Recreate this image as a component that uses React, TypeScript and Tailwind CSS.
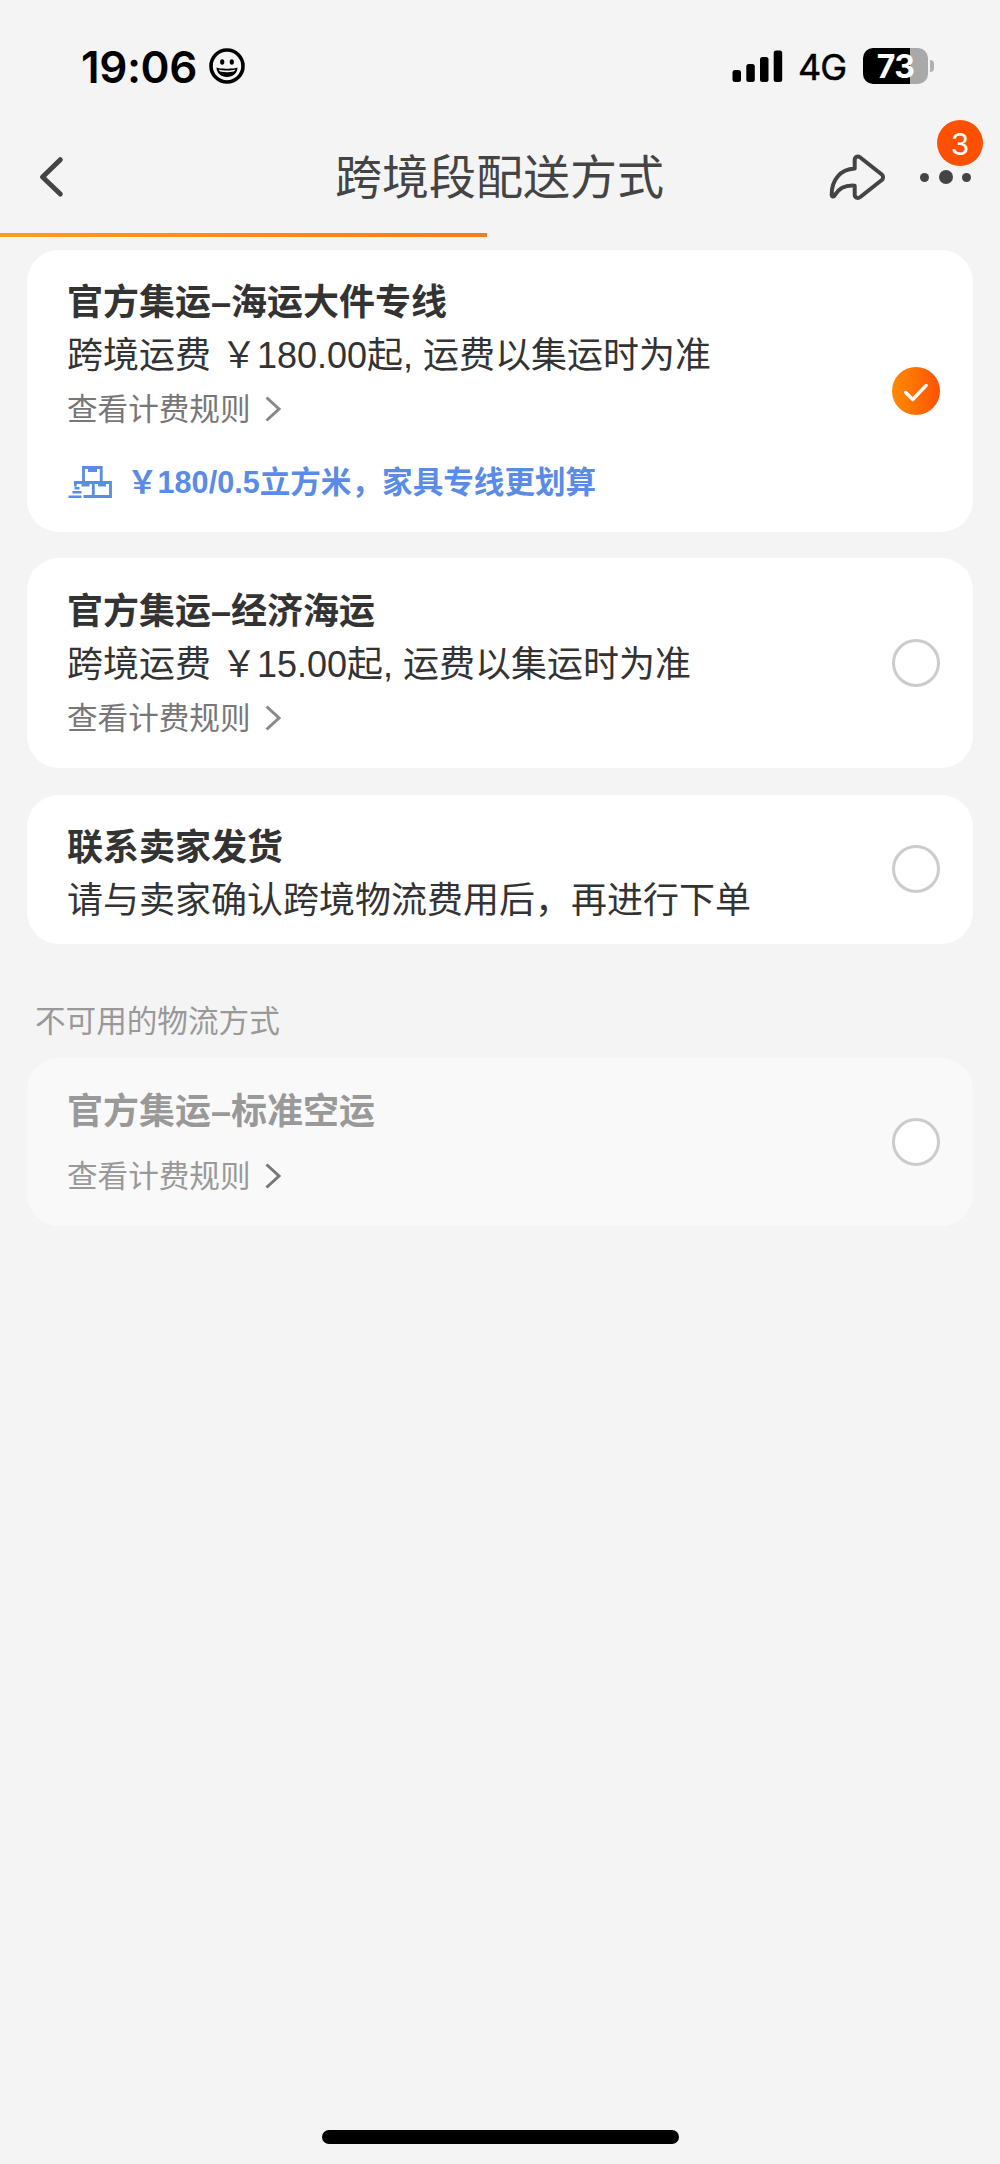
import React from 'react';
import clsx from 'clsx';

type ShippingOption = {
  title: string;
  price?: string;
  rules?: boolean;
  promo?: string;
  selected?: boolean;
  disabled?: boolean;
  className: string;
};

// \uFFE5 is the full-width yen sign, \uFF0C the full-width comma
const options: ShippingOption[] = [
  {
    title: '官方集运–海运大件专线',
    price: '跨境运费 \uFFE5180.00起, 运费以集运时为准',
    rules: true,
    promo: '\uFFE5180/0.5立方米\uFF0C家具专线更划算',
    selected: true,
    className: 'h-[282px] pt-[26px]',
  },
  {
    title: '官方集运–经济海运',
    price: '跨境运费 \uFFE515.00起, 运费以集运时为准',
    rules: true,
    className: 'mt-[26px] h-[210px] pt-[27px]',
  },
  {
    title: '联系卖家发货',
    price: '请与卖家确认跨境物流费用后\uFF0C再进行下单',
    className: 'mt-[27px] h-[149px] pt-[26px]',
  },
];

const unavailable: ShippingOption = {
  title: '官方集运–标准空运',
  rules: true,
  disabled: true,
  className: 'h-[168px] pt-[27px]',
};

function StatusBar() {
  return (
    <div className="flex h-[132px] items-center pl-[81px] pr-[66px] text-black">
      <span className="mt-[2px] font-[Inter] text-[44px] font-semibold leading-none tracking-[-0.4px]">19:06</span>
      <svg className="ml-3 h-9 w-9" viewBox="0 0 36 36" fill="none">
        <circle cx="18" cy="18" r="16" stroke="currentColor" strokeWidth="3.6" />
        <ellipse cx="13.2" cy="14" rx="2.1" ry="2.8" fill="currentColor" />
        <ellipse cx="22.8" cy="14" rx="2.1" ry="2.8" fill="currentColor" />
        <path d="M7.5 19.5c3 1.6 18 1.6 21 0 0 5.500-4.500 9.500-10.500 9.500s-10.500-4-10.500-9.500z" fill="currentColor" />
        <path d="M9.700 21.600c4 1.300 12.600 1.300 16.600 0-.3 1-.8 1.600-1.500 2-4 .7-9.600.7-13.600 0-.7-.4-1.200-1-1.500-2z" fill="#f4f4f4" />
      </svg>
      <svg className="ml-auto h-8 w-[51px]" viewBox="0 0 51 32" fill="currentColor">
        <rect x="0.500" y="20" width="8.500" height="12" rx="2.500" />
        <rect x="14.300" y="14" width="8.500" height="18" rx="2.500" />
        <rect x="28" y="7" width="8.500" height="25" rx="2.500" />
        <rect x="41.700" y="0.500" width="8.500" height="31.500" rx="2.500" />
      </svg>
      <span className="ml-[15px] mt-[2px] w-[49px] font-[Inter] text-[36px] leading-none tracking-[-1px] [-webkit-text-stroke:0.500px_black]">4G</span>
      <div className="ml-4 flex h-9 w-[65px] items-center justify-center rounded-[10px] bg-[linear-gradient(to_right,#000_73%,#a9a9a9_73%)]">
        <span className="mt-[2px] font-[Inter] text-[32px] font-bold leading-none tracking-[-0.5px] text-white">73</span>
      </div>
      <div className="ml-[2px] h-3 w-1 rounded-r-full bg-[#b0b0b0]" />
    </div>
  );
}

function NavBar() {
  return (
    <div className="flex h-[81px] items-center pl-9 pr-[29px] text-[#444]">
      <svg className="mt-[9px] h-12 w-8" viewBox="0 0 32 48" fill="none" stroke="currentColor" strokeWidth="5" strokeLinecap="round" strokeLinejoin="round">
        <path d="M24.300 6.700L6.500 24l17.800 17" />
      </svg>
      <h1 className="ml-[267px] mt-[11px] text-[47px] leading-[64px]">跨境段配送方式</h1>
      <svg className="ml-auto mt-2 h-12 w-[58px]" viewBox="0 0 58 48" fill="none" stroke="currentColor" strokeWidth="4" strokeLinejoin="round">
        <path d="M25.700 15.600V7c0-3.200 3-4.500 5.600-2.500l21.500 17c1.700 1.500 1.700 4 0 5.500L31.300 44c-2.600 2-5.600.7-5.600-2.500v-8.800c-8-.6-15 1.300-19.800 9.300-1.200 2.200-3.200 1.800-3.200-.6C2.700 27 11 16.500 25.700 15.600z" />
      </svg>
      <div className="relative ml-[33px] mt-[9px] flex w-[51px] items-center justify-between">
        <i className="h-[9px] w-[9px] rounded-full bg-current" />
        <i className="h-[14px] w-[14px] rounded-full bg-current" />
        <i className="h-[9px] w-[9px] rounded-full bg-current" />
        <span className="absolute -top-[50px] left-[17px] flex h-[46px] w-[46px] items-center justify-center rounded-full bg-[#ff5000] pt-[2px] font-[Inter] text-[30px] leading-none text-white">
          3
        </span>
      </div>
    </div>
  );
}

function BoxesIcon() {
  return (
    <svg className="h-8 w-[45px]" viewBox="0 0 45 32" fill="none" stroke="currentColor" strokeWidth="2.800">
      <path d="M16.500 15.500V1.500h17.700v14" />
      <path d="M21 2v4h9V2z" fill="currentColor" stroke="none" />
      <path d="M8.300 20.500v-4h35.200v14H16.500M26.300 17v13.500" />
      <path d="M14.500 16.500v4h8v-4zM31 16.500v4h8v-4z" fill="currentColor" stroke="none" />
      <path d="M7.500 22.300h5M5.500 26.300h9M1.500 30.700h13" strokeWidth="2.400" />
    </svg>
  );
}

function Radio({ selected }: { selected?: boolean }) {
  if (!selected) {
    return <span className="h-12 w-12 rounded-full border-[3px] border-[#ccc] bg-white" />;
  }
  return (
    <span className="flex h-12 w-12 items-center justify-center rounded-full bg-linear-to-r from-[#ff8a00] to-[#ff5000]">
      <svg className="mt-1 h-6 w-6" viewBox="0 0 24 24" fill="none" stroke="white" strokeWidth="3.400" strokeLinecap="round" strokeLinejoin="round">
        <path d="M1.700 11.500l7 7L22 4.500" />
      </svg>
    </span>
  );
}

function OptionCard({ option }: { option: ShippingOption }) {
  const { title, price, rules, promo, selected, disabled, className } = option;

  return (
    <div
      className={clsx(
        'flex justify-between rounded-[32px] pl-10 pr-[33px]',
        disabled ? 'bg-[#f9f9f9] text-[#999]' : 'bg-white text-[#333]',
        className
      )}
    >
      <div>
        <h2 className="text-[36px] font-bold leading-[53px]">{title}</h2>
        {price && <p className="text-[36px] leading-[54px]">{price}</p>}
        {rules && (
          <div className={clsx('flex items-center', disabled ? 'mt-4 text-[#999]' : 'mt-1 text-[#777]')}>
            <span className="text-[30.600px] leading-[44px]">查看计费规则</span>
            <svg
              className={clsx('ml-[14px] h-[26px] w-[17px]', disabled ? 'text-[#777]' : 'text-[#888]')}
              viewBox="0 0 17 26"
              fill="none"
              stroke="currentColor"
              strokeWidth="3"
            >
              <path d="M1.500 1.500L14 13 1.500 24.500" />
            </svg>
          </div>
        )}
        {promo && (
          <div className="mt-[29px] flex items-center text-[#5a8be6]">
            <BoxesIcon />
            <span className="ml-[15px] text-[30.600px] font-bold leading-[44px]">{promo}</span>
          </div>
        )}
      </div>
      {/* keep the radio centred on the whole card, not only on the text */}
      <div className="-mt-[27px] flex items-center">
        <Radio selected={selected} />
      </div>
    </div>
  );
}

export default function App() {
  return (
    <div className="flex h-[2164px] w-[1000px] flex-col bg-[#f4f4f4] font-['Liberation_Sans','Noto_Sans_CJK_SC',sans-serif]" lang="zh-CN">
      <StatusBar />
      <NavBar />
      <div className="mt-5 h-1 w-[487px] bg-linear-to-r from-[#ff9a1f] to-[#f57c1a]" />

      <main className="mt-[13px] px-[27px]">
        {options.map((option) => (
          <OptionCard key={option.title} option={option} />
        ))}
        <p className="mb-[15px] mt-[55px] pl-2 text-[30.600px] leading-[44px] text-[#999]">不可用的物流方式</p>
        <OptionCard option={unavailable} />
      </main>

      <div className="mx-auto mb-5 mt-auto h-[14px] w-[357px] rounded-full bg-black" />
    </div>
  );
}
